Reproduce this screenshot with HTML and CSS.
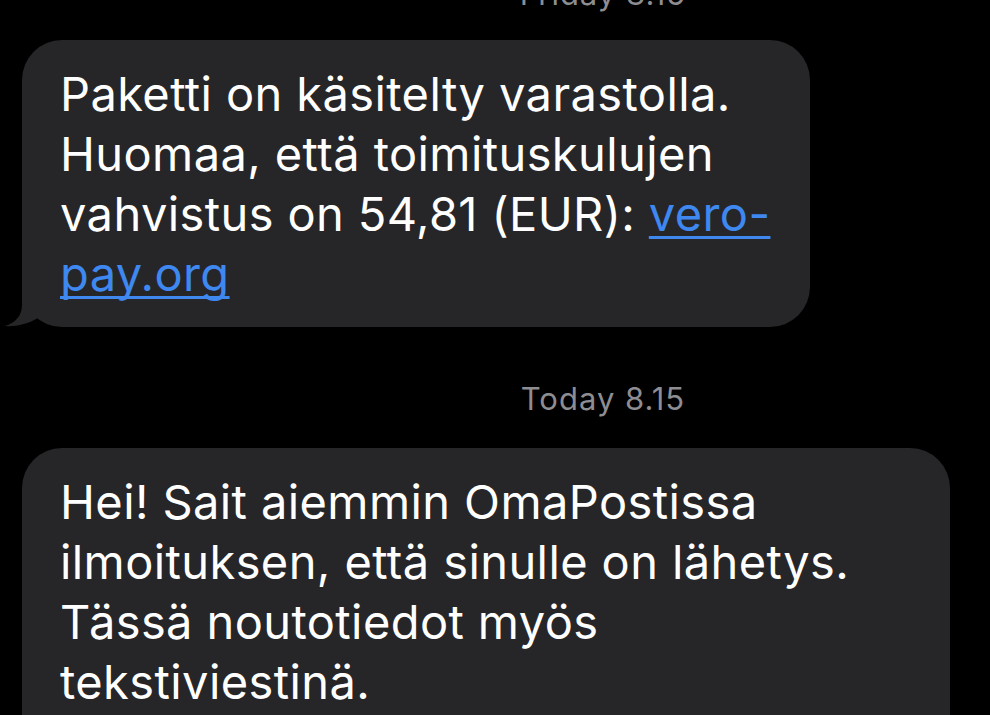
FILE: index.html
```html
<!DOCTYPE html>
<html lang="fi">
<head>
    <meta charset="UTF-8">
    <meta name="viewport" content="width=device-width, initial-scale=1.0">
    <title>Viestit</title>
    <link rel="stylesheet" href="styles.css">
</head>
<body>

    <div class="thread">
        <div class="stamp stamp-cut">Friday 8.15</div>

        <div class="bubble bubble-first">
            Paketti on käsitelty varastolla.<br>
            Huomaa, että toimituskulujen<br>
            vahvistus on 54,81 (EUR): <a href="#">vero-<br>pay.org</a>
            <svg class="tail" width="40" height="44" viewBox="0 0 40 44">
                <path d="M18,2 L18,22 C18,33 11,40 1,43 C11,44 24,41 34,35 L34,2 Z" fill="#262629"/>
            </svg>
        </div>

        <div class="stamp stamp-today">Today 8.15</div>

        <div class="bubble bubble-second">
            Hei! Sait aiemmin OmaPostissa<br>
            ilmoituksen, että sinulle on lähetys.<br>
            Tässä noutotiedot myös<br>
            tekstiviestinä.
        </div>
    </div>

</body>
</html>
```

FILE: styles.css
```css
html, body {
    margin: 0;
    background-color: #000;
    height: 100%;
    overflow: hidden;
}
body {
    font-family: Inter, "Liberation Sans", sans-serif;
    color: #fff;
}
.thread {
    padding-left: 22px;
}
.stamp {
    margin-left: 194px;
    text-align: center;
    font-size: 31px;
    line-height: 36px;
    letter-spacing: 1px;
    color: #8d8d92;
}
.stamp-cut {
    margin-top: -24px;
}
.stamp-today {
    margin-top: 54px;
}
.bubble {
    position: relative;
    box-sizing: border-box;
    background-color: #262629;
    border-radius: 40px;
    padding: 24px 30px 23px 38px;
    font-size: 47px;
    line-height: 60px;
    letter-spacing: 0.4px;
}
.bubble a {
    color: #3e88f0;
    text-decoration: underline;
    text-decoration-skip-ink: none;
    text-underline-offset: 5px;
    text-decoration-thickness: 3px;
}
.bubble-first {
    width: 788px;
    margin-top: 28px;
}
.bubble-second {
    width: 928px;
    margin-top: 31px;
    padding-bottom: 80px;
}
.tail {
    position: absolute;
    left: -18px;
    bottom: 0;
}
```
